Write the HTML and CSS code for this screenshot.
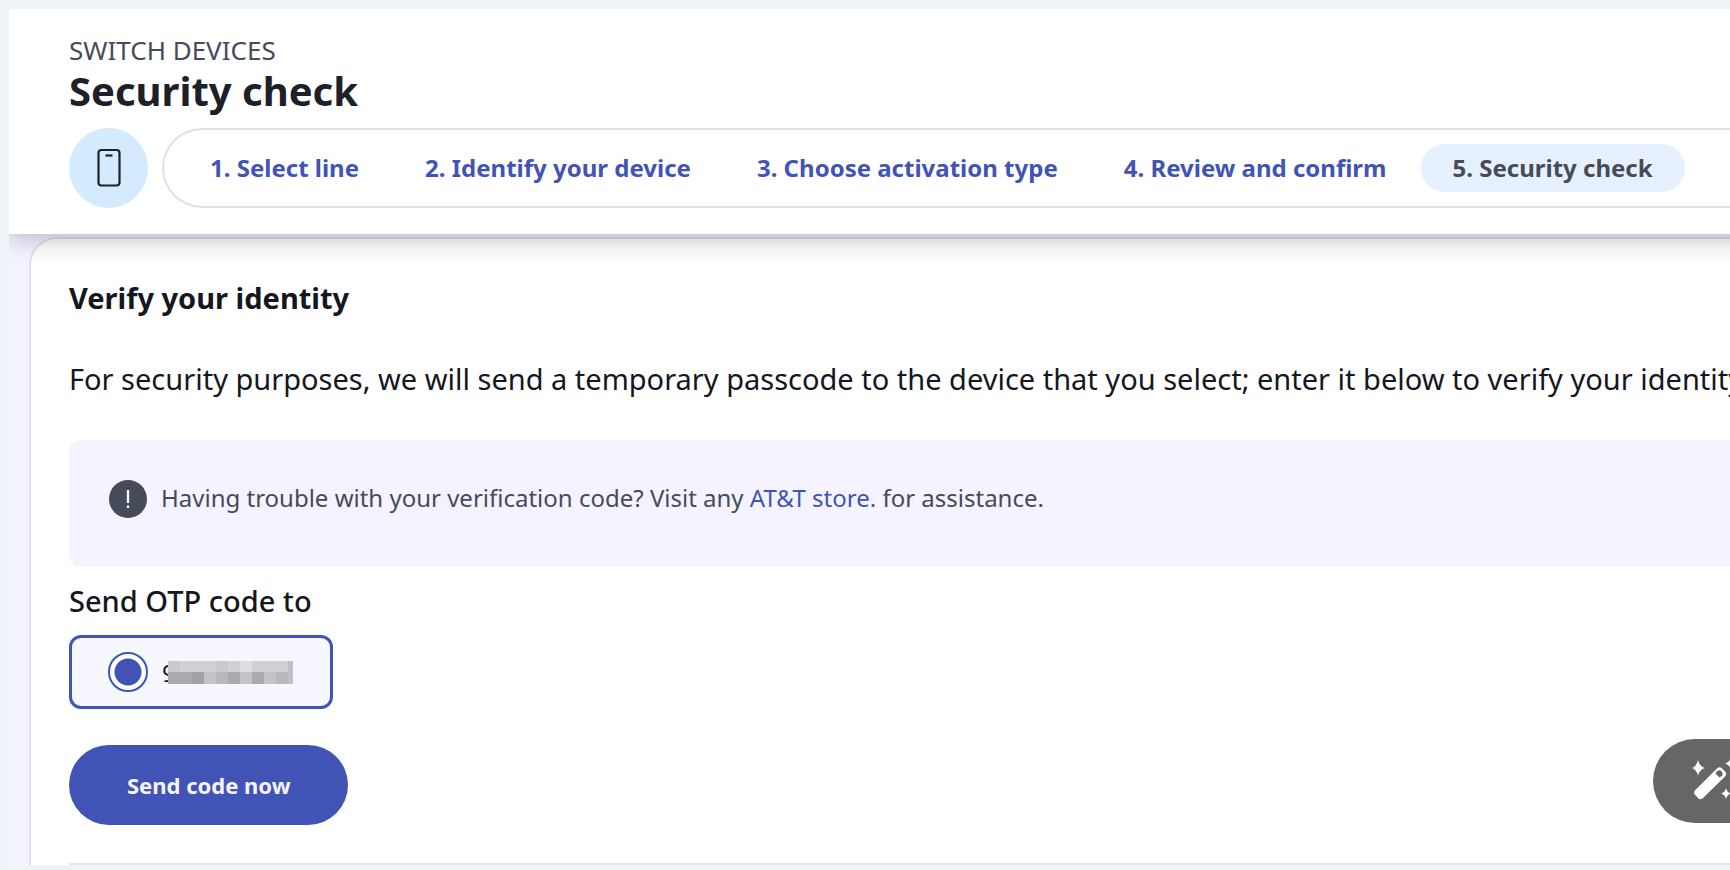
FILE: index.html
```
<!DOCTYPE html>
<html lang="en">
<head>
  <meta charset="UTF-8" />
  <meta name="viewport" content="width=device-width, initial-scale=1.0"/>
  <title>Switch devices - Security check</title>
  <link rel="stylesheet" href="styles.css">
</head>
<body>
  <div class="page">
    <header class="page-header">
      <p class="eyebrow">SWITCH DEVICES</p>
      <h1>Security check</h1>
      <div class="stepper">
        <span class="device-badge">
          <svg width="24" height="40" viewBox="0 0 24 40" fill="none" stroke="#1d2329" stroke-width="2.200">
            <rect x="1.500" y="2" width="21" height="35.500" rx="3"/>
            <path d="M8.500 7.500h7"/>
          </svg>
        </span>
        <nav class="steps" aria-label="Progress">
          <a href="#line">1. Select line</a>
          <a href="#device">2. Identify your device</a>
          <a href="#activation">3. Choose activation type</a>
          <a href="#review">4. Review and confirm</a>
          <a href="#security" class="current" aria-current="step">5. Security check</a>
        </nav>
      </div>
    </header>

    <main class="card">
      <h2>Verify your identity</h2>
      <p class="intro">For security purposes, we will send a temporary passcode to the device that you select; enter it below to verify your identity.</p>

      <div class="notice">
        <svg class="notice-icon" width="38" height="38" viewBox="0 0 38 38">
          <circle cx="19" cy="19" r="19" fill="#454b58"/>
          <path d="M17.800 10h2.400v13h-2.400zM17.800 25.500h2.400v2.500h-2.400z" fill="#f5f3ff"/>
        </svg>
        <p>Having trouble with your verification code? Visit any <a href="#stores">AT&amp;T store.</a> for assistance.</p>
      </div>

      <form class="otp-form" onsubmit="return false">
        <h3>Send OTP code to</h3>
        <label class="otp-option">
          <input type="radio" name="otp-number" checked>
          <span class="digit">9</span>
          <!-- masked phone number -->
          <svg class="mask" width="125" height="23" viewBox="0 0 125 23" shape-rendering="crispEdges" aria-label="hidden number">
            <rect width="125" height="11" fill="#d0d1d6"/>
            <rect y="11" width="125" height="12" fill="#b8b9be"/>
            <path d="M0 0h12v11h-12zM48 0h12v11h-12z" fill="#c9cacf"/>
            <path d="M72 0h12v11h-12z" fill="#dddee4"/>
            <path d="M0 11h24v12h-24zM60 11h12v12h-12zM84 11h12v12h-12z" fill="#aaabb0"/>
            <path d="M24 11h12v12h-12z" fill="#a1a2a7"/>
            <path d="M36 11h12v12h-12zM72 11h12v12h-12zM96 11h12v12h-12z" fill="#c3c4c9"/>
            <path d="M120 0h5v23h-5z" fill="#c0c1c6"/>
          </svg>
        </label>
        <button type="submit" class="send-button">Send code now</button>
      </form>
      <hr>
    </main>
  </div>

  <button class="assistant-button" aria-label="Assistant">
    <svg width="48" height="48" viewBox="0 0 48 48" fill="#fff">
      <path d="M8 3Q9.500 9.500 15 11Q9.500 12.500 8 18.500Q6.500 12.500 2 11Q6.500 9.500 8 3z"/>
      <path d="M41 0Q42 5 47 6.500Q42 8 41 13Q40 8 35 6.500Q40 5 41 0z"/>
      <path d="M36 31Q37 35.500 41 36.500Q37 37.500 36 42Q35 37.500 31 36.500Q35 35.500 36 31z"/>
      <path fill-rule="evenodd" d="M4.800 33.500L27.500 11Q29.500 9.500 31.500 11L35.500 15Q37 17 35.500 19L12.500 41.500Q10.500 43 8.500 41.500L4.800 37.500Q3.500 35.500 4.800 33.500zM27 14L25.500 16.500L29.500 20.500L32.500 18.500L32.500 15.500L30 13z"/>
    </svg>
  </button>
</body>
</html>
```
FILE: styles.css
```
* {
  box-sizing: border-box;
}

body {
  margin: 0;
  background-color: #eef4f7;
  color: #15171f;
  font-family: 'Noto Sans', sans-serif;
  overflow: hidden;
}

h1, h2, h3, p {
  margin: 0;
}

a {
  color: #4154b6;
  text-decoration: none;
}

.page {
  margin: 9px 0 0 9px;
  background-color: #f5f3ff;
  overflow: hidden;
}

.page-header {
  position: relative;
  margin-right: -32px;
  padding: 25px 0 26px 60px;
  background-color: #fff;
  box-shadow: 0 4px 24px rgba(30, 32, 50, 0.3);
}

.eyebrow {
  color: #454b58;
  font-size: 26px;
  line-height: 32px;
}

h1 {
  margin-bottom: 12px;
  color: #1d2029;
  font-size: 40px;
  line-height: 50px;
}

.stepper {
  display: flex;
  gap: 14px;
}

.device-badge {
  display: flex;
  flex: none;
  align-items: center;
  justify-content: center;
  width: 79px;
  height: 80px;
  border-radius: 50%;
  background-color: #d3eaff;
}

.steps {
  display: flex;
  flex: 1;
  align-items: center;
  gap: 2px;
  height: 80px;
  padding-left: 14px;
  border: 2px solid #e1dfee;
  border-right: 0;
  border-radius: 40px 0 0 40px;
  white-space: nowrap;
}

.steps a {
  padding: 0 32px;
  border-radius: 24px;
  font-size: 24px;
  font-weight: 700;
  line-height: 48px;
}

.steps .current {
  background-color: #e6f0ff;
  color: #454b58;
}

.card {
  margin: 3px 0 0 20px;
  padding: 39px 0 0 38px;
  border: 2px solid #e1dfee;
  border-right: 0;
  border-bottom: 0;
  border-radius: 28px 0 0 0;
  background-color: #fff;
}

h2 {
  font-size: 29px;
  line-height: 40px;
}

.intro {
  margin: 41px 0;
  font-size: 29px;
  line-height: 40px;
  white-space: nowrap;
}

.notice {
  display: flex;
  gap: 14px;
  height: 127px;
  padding: 40px;
  border-radius: 12px 0 0 12px;
  background-color: #f5f3ff;
  color: #454b58;
  font-size: 24px;
  line-height: 36px;
}

.notice-icon {
  flex: none;
}

h3 {
  margin: 14px 0;
  font-size: 29px;
  font-weight: 500;
  line-height: 40px;
}

.otp-option {
  display: flex;
  align-items: center;
  width: 264px;
  height: 74px;
  padding-left: 36px;
  border: 3px solid #4154b6;
  border-radius: 12px;
  background-color: #f7f7ff;
  font-size: 24px;
}

.otp-option input {
  appearance: none;
  width: 40px;
  height: 40px;
  margin: 0 14px 0 0;
  border: 2px solid #4154b6;
  border-radius: 50%;
  background: radial-gradient(circle, #4154b6 13px, #fff 14px);
}

/* the mask covers all but the edge of the first digit */
.digit {
  width: 6px;
}

.send-button {
  display: block;
  margin: 36px 0 38px;
  padding: 0 58px;
  border: none;
  border-radius: 40px;
  background-color: #4154b6;
  color: #f5f3ff;
  font-family: inherit;
  font-size: 22px;
  font-weight: 700;
  line-height: 80px;
  cursor: pointer;
}

hr {
  height: 2px;
  margin: 0;
  border: none;
  background-color: #e4e6f5;
}

.assistant-button {
  position: fixed;
  right: -44px;
  bottom: 47px;
  display: flex;
  align-items: center;
  justify-content: center;
  width: 121px;
  height: 84px;
  padding: 0;
  border: none;
  border-radius: 42px;
  background-color: #666;
  cursor: pointer;
}
```
